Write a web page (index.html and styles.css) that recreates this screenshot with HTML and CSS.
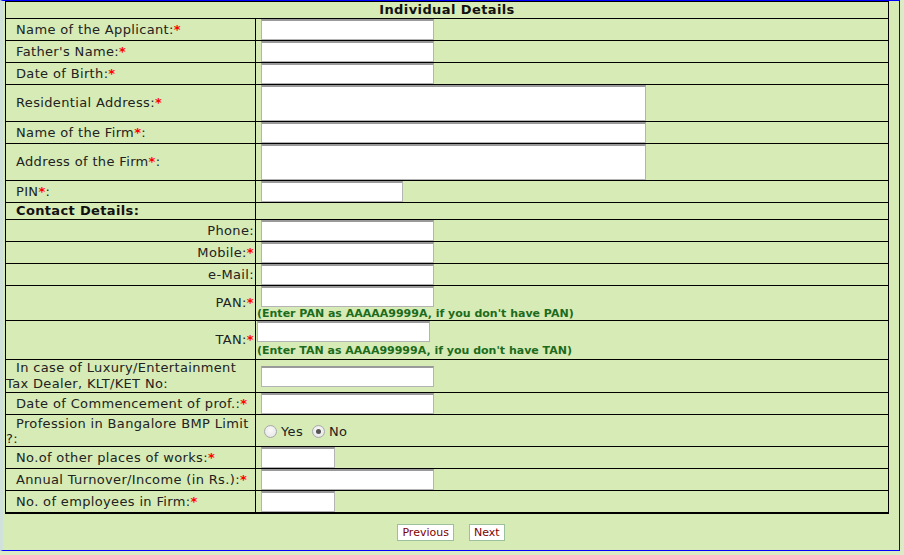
FILE: index.html
```html
<!DOCTYPE html>
<html>
<head>
<meta charset="utf-8">
<title>Individual Details</title>
<link rel="stylesheet" href="styles.css">
</head>
<body>
<div class="page">
  <table class="form">
    <colgroup><col class="c-lbl"><col class="c-val"></colgroup>
    <tr class="h17"><th colspan="2" class="title">Individual Details</th></tr>
    <tr class="h22"><td class="lbl">Name of the Applicant:<span class="req">*</span></td><td class="val"><input class="in in-md" type="text"></td></tr>
    <tr class="h22"><td class="lbl">Father's Name:<span class="req">*</span></td><td class="val"><input class="in in-md" type="text"></td></tr>
    <tr class="h22"><td class="lbl">Date of Birth:<span class="req">*</span></td><td class="val"><input class="in in-md" type="text"></td></tr>
    <tr class="h37"><td class="lbl">Residential Address:<span class="req">*</span></td><td class="val"><textarea class="in in-area"></textarea></td></tr>
    <tr class="h22"><td class="lbl">Name of the Firm<span class="req">*</span>:</td><td class="val"><input class="in in-lg" type="text"></td></tr>
    <tr class="h37"><td class="lbl">Address of the Firm<span class="req">*</span>:</td><td class="val"><textarea class="in in-area"></textarea></td></tr>
    <tr class="h22"><td class="lbl">PIN<span class="req">*</span>:</td><td class="val"><input class="in in-pin" type="text"></td></tr>
    <tr class="h17"><td class="lbl sec">Contact Details:</td><td class="val"></td></tr>
    <tr class="h22"><td class="lbl right">Phone:</td><td class="val"><input class="in in-md" type="text"></td></tr>
    <tr class="h22"><td class="lbl right">Mobile:<span class="req">*</span></td><td class="val"><input class="in in-md" type="text"></td></tr>
    <tr class="h22"><td class="lbl right">e-Mail:</td><td class="val"><input class="in in-md" type="text"></td></tr>
    <tr class="h35"><td class="lbl right">PAN:<span class="req">*</span></td><td class="val top"><input class="in in-md" type="text"><div class="hint">(Enter PAN as AAAAA9999A, if you don't have PAN)</div></td></tr>
    <tr class="h39"><td class="lbl right">TAN:<span class="req">*</span></td><td class="val top flush"><input class="in in-md" type="text"><div class="hint">(Enter TAN as AAAA99999A, if you don't have TAN)</div></td></tr>
    <tr class="h33"><td class="lbl">In case of Luxury/Entertainment Tax Dealer, KLT/KET No:</td><td class="val"><input class="in in-md" type="text"></td></tr>
    <tr class="h22"><td class="lbl">Date of Commencement of prof.:<span class="req">*</span></td><td class="val"><input class="in in-md" type="text"></td></tr>
    <tr class="h32"><td class="lbl tight">Profession in Bangalore BMP Limit ?:</td><td class="val"><div class="opts"><label class="opt"><input class="radio" type="radio" name="bmp">Yes</label><label class="opt"><input class="radio" type="radio" name="bmp" checked>No</label></div></td></tr>
    <tr class="h22"><td class="lbl">No.of other places of works:<span class="req">*</span></td><td class="val"><input class="in in-sm" type="text"></td></tr>
    <tr class="h22"><td class="lbl">Annual Turnover/Income (in Rs.):<span class="req">*</span></td><td class="val"><input class="in in-md" type="text"></td></tr>
    <tr class="h22"><td class="lbl">No. of employees in Firm:<span class="req">*</span></td><td class="val"><input class="in in-sm" type="text"></td></tr>
  </table>
  <div class="actions">
    <button class="btn" type="button">Previous</button>
    <button class="btn" type="button">Next</button>
  </div>
</div>
</body>
</html>
```
FILE: styles.css
```css
html, body {
  margin: 0;
  padding: 0;
  background: #dcebc6;
}
body {
  font-family: "DejaVu Sans", Verdana, sans-serif;
  font-size: 13px;
  color: #222;
  letter-spacing: 0.35px;
}
.page {
  width: 896px;
  height: 549px;
  background: #d6ebb5;
  border-top: 1px solid #0000ff;
  border-right: 1px solid #0000ff;
  border-bottom: 1px solid #0000ff;
  border-left: 3px solid #cfe1da;
}
.form {
  border-collapse: collapse;
  table-layout: fixed;
  width: 884px;
  margin-left: 2px;
  border: 1px solid #000;
  border-bottom: 2px solid #000;
}
.c-lbl { width: 250px; }
.form th, .form td {
  border: 1px solid #000;
  padding: 0;
  line-height: 16px;
}
.title {
  font-weight: bold;
  text-align: center;
  color: #111;
  letter-spacing: 0.4px;
}
.lbl {
  text-indent: 10px;
  vertical-align: middle;
}
.form td.lbl.tight {
  line-height: 15px;
}
.lbl.right {
  text-align: right;
  text-indent: 0;
  padding-right: 1px;
}
.lbl.sec {
  font-weight: bold;
  color: #111;
}
.val {
  vertical-align: middle;
}
.form td.val {
  padding-left: 5px;
}
.form td.val.flush {
  padding-left: 1px;
}
.val.top {
  vertical-align: top;
}
.req {
  color: #ff0000;
  font-weight: bold;
}
.h17 { height: 17px; }
.h22 { height: 22px; }
.h32 { height: 32px; }
.h33 { height: 33px; }
.h35 { height: 35px; }
.h37 { height: 37px; }
.h39 { height: 39px; }
.in {
  box-sizing: border-box;
  display: block;
  margin: 0;
  height: 21px;
  background: #fff;
  border: 1px solid #b4b4b4;
  border-top: 2px solid #9a9a9a;
  font-family: inherit;
  font-size: 13px;
  padding: 1px 2px;
}
.in-md { width: 173px; }
.in-lg { width: 385px; }
.in-pin { width: 142px; }
.in-sm { width: 74px; }
.in-area {
  width: 385px;
  height: 36px;
  resize: none;
}
.hint {
  font-size: 11px;
  font-weight: bold;
  color: #1d6b1d;
  line-height: 13px;
  letter-spacing: 0;
  margin-left: -4px;
}
.val.flush .hint {
  margin-left: 0;
  margin-top: 2px;
}
.opts {
  display: flex;
  align-items: center;
  height: 16px;
  margin-top: 2px;
}
.opt {
  display: flex;
  align-items: center;
  margin-right: 6px;
}
.radio {
  appearance: none;
  -webkit-appearance: none;
  width: 13px;
  height: 13px;
  margin: 0 4px 0 3px;
  border: 1px solid #a8a8a8;
  border-radius: 50%;
  background: radial-gradient(circle at 50% 40%, #fafafa 0%, #e2e2e2 100%);
  position: relative;
}
.radio:checked::after {
  content: "";
  position: absolute;
  left: 3px;
  top: 3px;
  width: 5px;
  height: 5px;
  border-radius: 50%;
  background: #555;
}
.actions {
  display: flex;
  justify-content: center;
  gap: 15px;
  margin-top: 10px;
}
.btn {
  font-family: inherit;
  font-size: 11px;
  letter-spacing: 0;
  color: #800000;
  background: #fff;
  border: 1px solid #9cbf9c;
  height: 17px;
  padding: 0 4px;
  line-height: 13px;
}
```
